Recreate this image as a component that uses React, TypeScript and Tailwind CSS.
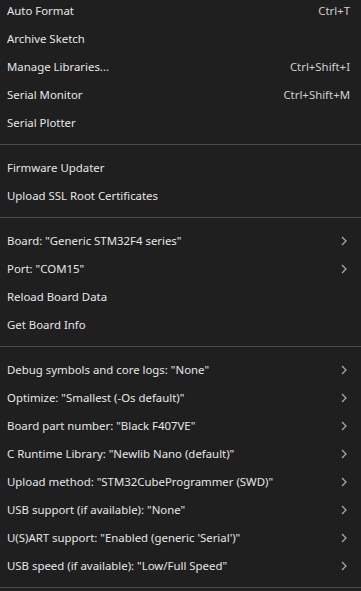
import React from 'react';

type Item = { label: string; shortcut?: string; submenu?: boolean };

const groups: Item[][] = [
  [
    { label: 'Auto Format', shortcut: 'Ctrl+T' },
    { label: 'Archive Sketch' },
    { label: 'Manage Libraries...', shortcut: 'Ctrl+Shift+I' },
    { label: 'Serial Monitor', shortcut: 'Ctrl+Shift+M' },
    { label: 'Serial Plotter' },
  ],
  [{ label: 'Firmware Updater' }, { label: 'Upload SSL Root Certificates' }],
  [
    { label: 'Board: "Generic STM32F4 series"', submenu: true },
    { label: 'Port: "COM15"', submenu: true },
    { label: 'Reload Board Data' },
    { label: 'Get Board Info' },
  ],
  [
    { label: 'Debug symbols and core logs: "None"', submenu: true },
    { label: 'Optimize: "Smallest (-Os default)"', submenu: true },
    { label: 'Board part number: "Black F407VE"', submenu: true },
    { label: 'C Runtime Library: "Newlib Nano (default)"', submenu: true },
    { label: 'Upload method: "STM32CubeProgrammer (SWD)"', submenu: true },
    { label: 'USB support (if available): "None"', submenu: true },
    { label: 'U(S)ART support: "Enabled (generic \'Serial\')"', submenu: true },
    { label: 'USB speed (if available): "Low/Full Speed"', submenu: true },
  ],
];

function Chevron() {
  return (
    <svg width="6" height="10" viewBox="0 0 6 10" className="text-[#a8a8a8]">
      <path d="M1 1 L5 5 L1 9" fill="none" stroke="currentColor" strokeWidth="1.3" />
    </svg>
  );
}

function MenuRow({ item }: { item: Item }) {
  return (
    <div className="flex h-[28px] items-center justify-between pl-[7px] pr-[11px]">
      <span className="text-[#e6e6e6]">{item.label}</span>
      {item.shortcut && <span className="text-[#cfcfcf]">{item.shortcut}</span>}
      {item.submenu && (
        <span className="mr-[3px] flex items-center">
          <Chevron />
        </span>
      )}
    </div>
  );
}

export default function App() {
  return (
    <div
      className="h-[591px] w-[361px] overflow-hidden bg-[#1f1f1f] text-[11.4px]"
      style={{ fontFamily: '"Noto Sans", "Segoe UI", sans-serif' }}
    >
      <div className="mt-[-3px]">
        {groups.map((group, gi) => (
          <div key={gi}>
            {group.map((item) => (
              <MenuRow key={item.label} item={item} />
            ))}
            <div className="mb-[9px] mt-[7px] h-px bg-[#4a4a4a]" />
          </div>
        ))}
      </div>
    </div>
  );
}
